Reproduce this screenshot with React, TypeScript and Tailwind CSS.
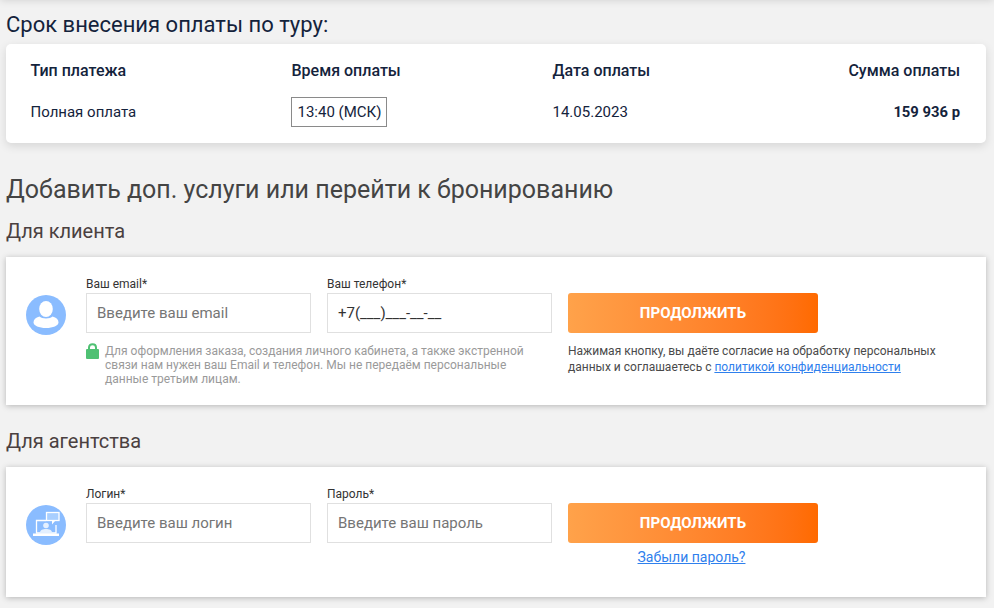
import React from 'react';

const font = "font-['Roboto',sans-serif]";

const UserIcon = () => (
  <svg width="40" height="40" viewBox="0 0 40 40" className="shrink-0">
    <circle cx="20" cy="20" r="20" fill="#8abcff" />
    <ellipse cx="20" cy="14" rx="6.8" ry="8" fill="#fff" />
    <path d="M13.5 21.5C15.5 24 24.5 24 26.5 21.5C30.5 22.5 32.5 24.5 32.5 27.5C32.5 30.5 27 33 20 33C13 33 7.5 30.5 7.5 27.5C7.5 24.5 9.5 22.5 13.5 21.5Z" fill="#fff" />
  </svg>
);

const AgentIcon = () => (
  <svg width="40" height="40" viewBox="0 0 40 40" className="shrink-0">
    <circle cx="20" cy="20" r="20" fill="#8abcff" />
    <path d="M20 15.5H10.5V28H30V20" fill="none" stroke="#fff" strokeWidth="1.3" />
    <rect x="7" y="28.5" width="26" height="2.5" fill="#fff" />
    <rect x="20.5" y="7.5" width="12.5" height="8" fill="#a9cfff" stroke="#fff" strokeWidth="1.3" />
    <path d="M26 15.5V19.5L29.5 15.5Z" fill="#fff" />
    <circle cx="20" cy="20.5" r="2.8" fill="#e4f0ff" />
    <path d="M14 27.5C14 25 17 24 20 24C23 24 26 25 26 27.5Z" fill="#e4f0ff" />
  </svg>
);

const LockIcon = () => (
  <svg width="13" height="16" viewBox="0 0 13 16" className="shrink-0">
    <path d="M3 7V4.5C3 2.5 4.5 1.2 6.5 1.2C8.5 1.2 10 2.5 10 4.5V7" fill="none" stroke="#4fc173" strokeWidth="2" />
    <rect x="0" y="6" width="13" height="10" rx="1" fill="#4fc173" />
  </svg>
);

const Field = ({ label, placeholder, value }: { label: string; placeholder?: string; value?: string }) => (
  <div className="w-[225px] shrink-0 relative">
    <label className="absolute left-0 top-[-16px] text-xs leading-[14px] text-[#333]">{label}</label>
    <div className={`h-10 border border-[#e0e0e0] bg-white pl-[10px] flex items-center text-[15px] ${value ? 'text-[#333]' : 'text-[#757575]'}`}>
      {value ?? placeholder}
    </div>
  </div>
);

const SubmitButton = () => (
  <button type="button" className="w-[250px] h-10 rounded-[3px] bg-gradient-to-r from-[#ffa24a] to-[#ff6a00] text-white font-bold text-[15px]">
    ПРОДОЛЖИТЬ
  </button>
);

const App: React.FC = () => {
  return (
    <div className={`${font} w-[994px] h-[608px] overflow-hidden bg-[#f2f2f2] pl-[6px] pr-[8px] relative`}>
      <div className="absolute left-0 right-0 top-[-10px] h-[10px] shadow-[0_0_8px_rgba(0,0,0,0.15)]" />

      <h2 className="pt-[12px] text-[22px] leading-[26px] text-[#14233c]">Срок внесения оплаты по туру:</h2>
      <div className="mt-[6px] h-[99px] bg-white rounded-[5px] shadow-[0_3px_10px_rgba(0,0,0,0.12)] pl-[24.5px] pr-[26px] pt-[17px] text-[#14233c]">
        <div className="flex items-center font-medium text-base leading-[20px]">
          <div className="w-[261px]">Тип платежа</div>
          <div className="w-[261px]">Время оплаты</div>
          <div className="w-[200px]">Дата оплаты</div>
          <div className="flex-1 text-right">Сумма оплаты</div>
        </div>
        <div className="flex items-center mt-[16px] text-[15px] leading-[20px]">
          <div className="w-[261px]">Полная оплата</div>
          <div className="w-[261px]">
            <span className="inline-flex items-center h-[30px] -ml-[1px] pl-[6px] pr-[5px] border border-[#8a8a8a]">13:40 (МСК)</span>
          </div>
          <div className="w-[200px]">14.05.2023</div>
          <div className="flex-1 text-right font-bold text-[14.8px]">159 936 р</div>
        </div>
      </div>

      <h2 className="mt-[32px] text-[25px] leading-[30px] text-[#444]">Добавить доп. услуги или перейти к бронированию</h2>
      <h3 className="mt-[13px] text-xl leading-[26px] text-[#4a4040]">Для клиента</h3>
      <div className="mt-[13px] h-[148px] bg-white shadow-[0_1px_6px_rgba(0,0,0,0.25)] pl-5 pt-9">
        <div className="flex gap-5">
          <div className="pt-[2px]"><UserIcon /></div>
          <div className="flex gap-4">
            <div className="w-[466px] shrink-0">
              <div className="flex gap-4">
                <Field label="Ваш email*" placeholder="Введите ваш email" />
                <Field label="Ваш телефон*" value="+7(___)___-__-__" />
              </div>
              <div className="flex gap-[6px] mt-[10px] pr-[20px] text-xs leading-[14px] text-[#9a9a9a]">
                <LockIcon />
                <p className="pt-px">Для оформления заказа, создания личного кабинета, а также экстренной связи нам нужен ваш Email и телефон. Мы не передаём персональные данные третьим лицам.</p>
              </div>
            </div>
            <div className="w-[380px]">
              <SubmitButton />
              <p className="mt-[10px] text-xs leading-[16px] text-[#4a4a4a]">
                Нажимая кнопку, вы даёте согласие на обработку персональных данных и соглашаетесь с <a className="text-[#2f80ed] underline">политикой конфиденциальности</a>
              </p>
            </div>
          </div>
        </div>
      </div>

      <h3 className="mt-[23px] text-xl leading-[26px] text-[#4a4040]">Для агентства</h3>
      <div className="mt-[13px] h-[130px] bg-white shadow-[0_1px_6px_rgba(0,0,0,0.25)] pl-5 pt-9">
        <div className="flex gap-5">
          <div className="pt-[2px]"><AgentIcon /></div>
          <div className="flex gap-4">
            <Field label="Логин*" placeholder="Введите ваш логин" />
            <Field label="Пароль*" placeholder="Введите ваш пароль" />
            <div className="w-[250px] text-center">
              <SubmitButton />
              <a className="block mt-[6px] pr-[3px] text-sm leading-[16px] text-[#2f80ed] underline">Забыли пароль?</a>
            </div>
          </div>
        </div>
      </div>
    </div>
  );
};

export default App;
